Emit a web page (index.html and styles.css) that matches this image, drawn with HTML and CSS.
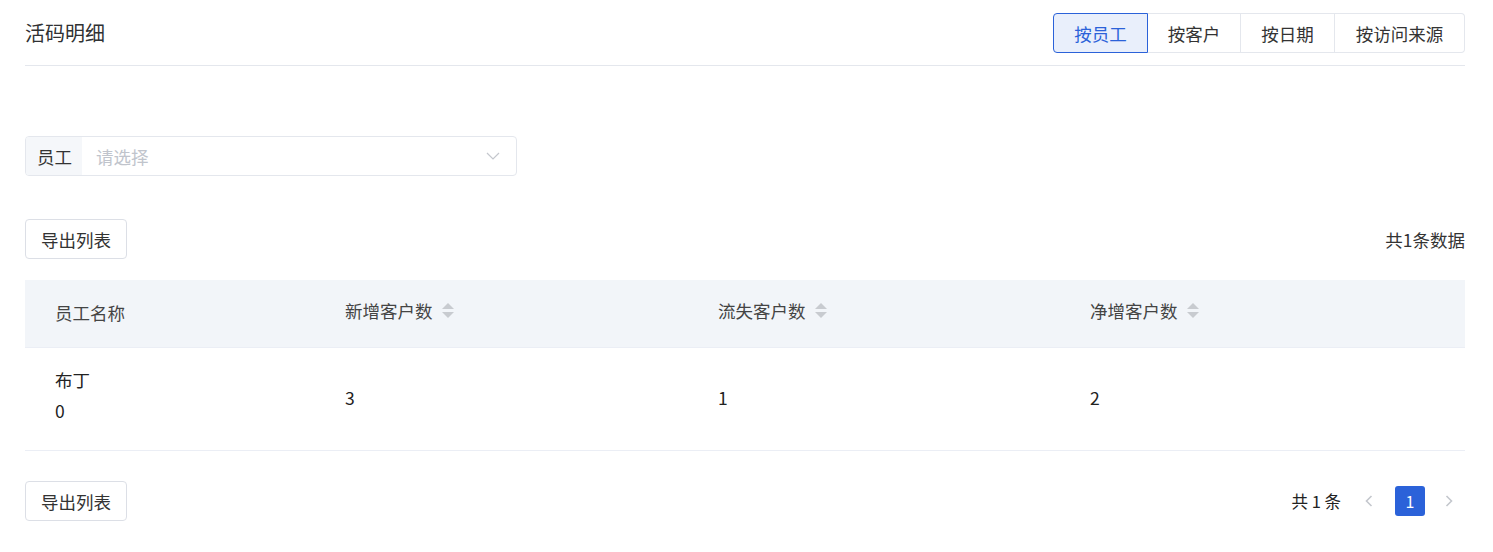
FILE: index.html
```html
<!DOCTYPE html>
<html lang="zh-CN">
<head>
<meta charset="utf-8">
<title>活码明细</title>
<link rel="stylesheet" href="styles.css">
</head>
<body>
<div class="page">
  <div class="header">
    <div class="title">活码明细</div>
    <div class="seg">
      <button class="seg-btn active">按员工</button>
      <button class="seg-btn">按客户</button>
      <button class="seg-btn">按日期</button>
      <button class="seg-btn wide">按访问来源</button>
    </div>
  </div>

  <div class="filter">
    <div class="select">
      <span class="select-label">员工</span>
      <span class="select-ph">请选择</span>
      <svg class="chev" width="14" height="8" viewBox="0 0 14 8"><path d="M1 1 L7 7 L13 1" fill="none" stroke="#c4c7cd" stroke-width="1.2"/></svg>
    </div>
  </div>

  <div class="toolbar">
    <button class="btn">导出列表</button>
    <span class="total">共1条数据</span>
  </div>

  <div class="table">
    <div class="thead">
      <div class="cell first">员工名称</div>
      <div class="cell">新增客户数<span class="sort"><i class="up"></i><i class="down"></i></span></div>
      <div class="cell">流失客户数<span class="sort"><i class="up"></i><i class="down"></i></span></div>
      <div class="cell">净增客户数<span class="sort"><i class="up"></i><i class="down"></i></span></div>
    </div>
    <div class="trow">
      <div class="cell name"><span>布丁</span><span>0</span></div>
      <div class="cell">3</div>
      <div class="cell">1</div>
      <div class="cell">2</div>
    </div>
  </div>

  <div class="footer">
    <button class="btn">导出列表</button>
    <div class="pager">
      <span class="pager-total">共 1 条</span>
      <svg class="arrow" width="8" height="12" viewBox="0 0 8 12"><path d="M6.5 1 L1.5 6 L6.5 11" fill="none" stroke="#c4c7cd" stroke-width="1.6"/></svg>
      <span class="page-num">1</span>
      <svg class="arrow" width="8" height="12" viewBox="0 0 8 12"><path d="M1.5 1 L6.5 6 L1.5 11" fill="none" stroke="#c4c7cd" stroke-width="1.6"/></svg>
    </div>
  </div>
</div>
</body>
</html>
```

FILE: styles.css
```css
* { box-sizing: border-box; }
html, body { margin: 0; padding: 0; background: #fff; }
body {
  font-family: "Noto Sans CJK SC", "Noto Sans", sans-serif;
  color: #333;
  font-size: 17.5px;
}
.page {
  padding: 0 28px 0 25px;
}
.header {
  display: flex;
  align-items: center;
  justify-content: space-between;
  padding: 13px 0 12px;
  border-bottom: 1px solid #e4e7ed;
}
.title {
  font-size: 20px;
  color: #303133;
  line-height: 40px;
}
.seg {
  display: flex;
  height: 40px;
}
.seg-btn {
  font-family: inherit;
  font-size: 17.5px;
  color: #333;
  background: #fff;
  border: 1px solid #e4e7ed;
  border-left: none;
  height: 40px;
  width: 94px;
  padding: 0;
  cursor: pointer;
}
.seg-btn.active {
  width: 95px;
  border: 1px solid #2b62d9;
  background: #e9effb;
  color: #2b62d9;
  border-radius: 4px 0 0 4px;
}
.seg-btn.wide {
  width: 130px;
  border-radius: 0 4px 4px 0;
}
.seg-btn:nth-child(2) { width: 93px; }
.filter {
  margin-top: 70px;
}
.select {
  width: 492px;
  height: 40px;
  border: 1px solid #e4e7ed;
  border-radius: 4px;
  display: flex;
  align-items: center;
  overflow: hidden;
}
.select-label {
  background: #f5f7fa;
  height: 100%;
  width: 56px;
  display: flex;
  align-items: center;
  padding-left: 11px;
  color: #333;
}
.select-ph {
  flex: 1;
  padding-left: 14px;
  color: #c0c4cc;
}
.chev {
  margin-right: 16px;
}
.toolbar {
  margin-top: 43px;
  display: flex;
  align-items: center;
  justify-content: space-between;
}
.btn {
  font-family: inherit;
  font-size: 17.5px;
  color: #333;
  background: #fff;
  border: 1px solid #dcdfe6;
  border-radius: 4px;
  height: 40px;
  width: 102px;
  padding: 0;
}
.total {
  color: #333;
}
.table {
  margin-top: 21px;
}
.thead, .trow {
  display: grid;
  grid-template-columns: 290px 373px 372px 1fr;
  border-bottom: 1px solid #ebeef5;
}
.thead {
  background: #f2f5f9;
  height: 68px;
}
.trow {
  height: 103px;
}
.cell {
  display: flex;
  align-items: center;
  padding-left: 30px;
  color: #333;
}
.thead .cell {
  color: #444;
  padding-bottom: 6px;
}
.thead .cell.first {
  padding-bottom: 2px;
}
.trow .cell {
  color: #222;
  padding-bottom: 4px;
}
.trow .cell.name {
  flex-direction: column;
  align-items: flex-start;
  justify-content: center;
  line-height: 31px;
  padding-bottom: 8px;
}
.sort {
  display: inline-flex;
  flex-direction: column;
  gap: 3px;
  margin-left: 9px;
}
.sort i {
  display: block;
  width: 0;
  height: 0;
  border-left: 6px solid transparent;
  border-right: 6px solid transparent;
}
.sort .up { border-bottom: 6px solid #c8cbd0; }
.sort .down { border-top: 6px solid #c8cbd0; }
.footer {
  margin-top: 30px;
  display: flex;
  align-items: center;
  justify-content: space-between;
}
.pager {
  display: flex;
  align-items: center;
}
.pager-total {
  font-size: 16.5px;
  color: #222;
  margin-right: 24px;
}
.arrow { display: block; }
.page-num {
  width: 30px;
  height: 30px;
  background: #2b62d9;
  color: #fff;
  border-radius: 3px;
  display: flex;
  align-items: center;
  justify-content: center;
  font-size: 16px;
  margin: 0 20px 0 22px;
}
.pager .arrow:last-child { margin-right: 12px; }
```
